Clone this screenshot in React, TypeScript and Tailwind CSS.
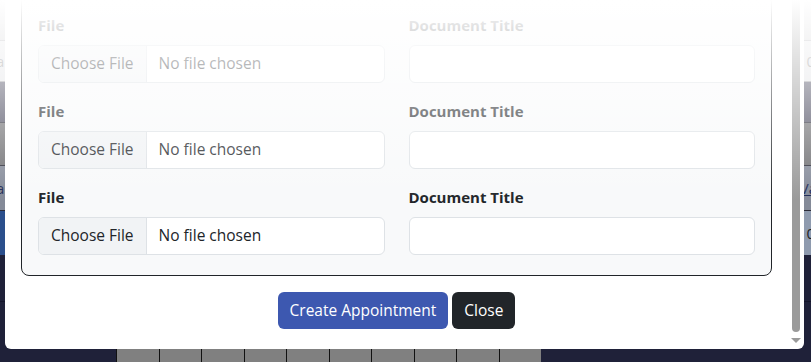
import React from 'react';

const font = { fontFamily: '"Open Sans", "Noto Sans", "Liberation Sans", sans-serif' };

// rows of the page behind the modal
const BackgroundTable: React.FC = () => (
	<div className="flex h-full flex-col">
		<div className="h-[40px] bg-[#c9c9cc]" />
		<div className="flex h-[42px] items-center justify-between border-y border-[#9a9aa0] bg-[#e2e3e6] text-[15px] text-[#8a8a8a]">
			<span className="-ml-[4px]">a</span>
			<span className="-mr-[4px]">0</span>
		</div>
		<div className="h-[40px] bg-[#4a4a5e]" />
		<div className="flex h-[43px] items-end justify-between border-t border-[#2b2b38] bg-[#6f6f72]" />
		<div className="flex h-[45px] items-center justify-between border-t border-[#2b2b38] bg-[#848a98] text-[15px] text-[#1f2a55]">
			<span className="-ml-[4px]">a</span>
			<span className="-mr-[6px] underline">Va</span>
		</div>
		<div className="flex h-[45px] items-center justify-between border-t border-[#2b2b38] bg-[#8e9aae] text-[15px] text-[#222]">
			<span className="h-full w-[6px] bg-[#2b4f8c]" />
			<span className="-mr-[4px]">0</span>
		</div>
		<div className="h-[47px] border-b border-[#14152a] bg-[#1f2139]" />
		<div className="relative flex-1 bg-[#1f2139]">
			<div className="ml-[116px] flex h-full">
				{Array.from({ length: 10 }).map((_, i) => (
					<div key={i} className="h-full w-[42.5px] border-l border-[#111] bg-[#808080]" />
				))}
			</div>
		</div>
	</div>
);

const FileRow: React.FC = () => (
	<div className="mb-4 grid grid-cols-2 gap-6">
		<div>
			<label className="mb-2 block text-[15px] leading-6 font-bold text-[#212529]">File</label>
			<div className="flex h-[38px] overflow-hidden rounded-md border border-[#dee2e6] bg-white text-[15.5px] text-[#212529]">
				<span className="flex items-center border-r border-[#dee2e6] bg-[#f1f3f5] px-3">Choose File</span>
				<span className="flex items-center px-3">No file chosen</span>
			</div>
		</div>
		<div>
			<label className="mb-2 block text-[15px] leading-6 font-bold text-[#212529]">Document Title</label>
			<div className="h-[38px] rounded-md border border-[#dee2e6] bg-white" />
		</div>
	</div>
);

export default function App() {
	return (
		<div className="relative h-[362px] w-[811px] overflow-hidden" style={font}>
			<BackgroundTable />

			{/* modal, scrolled down to its footer */}
			<div className="absolute top-0 left-[5px] flex h-[349px] w-[799px] overflow-hidden rounded-b-md bg-white">
				<div className="flex flex-1 flex-col justify-end px-4">
					<div className="rounded-lg border border-[#212529] bg-[#f8f9fa] px-4 pt-4 pb-[4px]">
						<FileRow />
						<FileRow />
						<FileRow />
						<FileRow />
					</div>
					<div className="flex justify-center gap-1 pt-4 pb-5">
						<button className="h-[37px] rounded-md bg-[#3d58b0] px-3 text-[15.5px] text-white">Create Appointment</button>
						<button className="h-[37px] rounded-md bg-[#212529] px-3 text-[15.5px] text-white">Close</button>
					</div>
				</div>
				{/* scrollbar */}
				<div className="flex w-[16px] flex-col items-center pb-[6px]">
					<div className="w-[8px] flex-1 rounded-b-full bg-[#9a9a9a]" />
					<div className="mt-[6px] h-0 w-0 border-x-[5px] border-t-[5px] border-x-transparent border-t-[#9a9a9a]" />
				</div>
			</div>

			{/* fade over the top of the screen */}
			<div className="pointer-events-none absolute top-0 right-0 left-0 h-[200px] bg-linear-to-b from-white to-white/0" />
		</div>
	);
}
